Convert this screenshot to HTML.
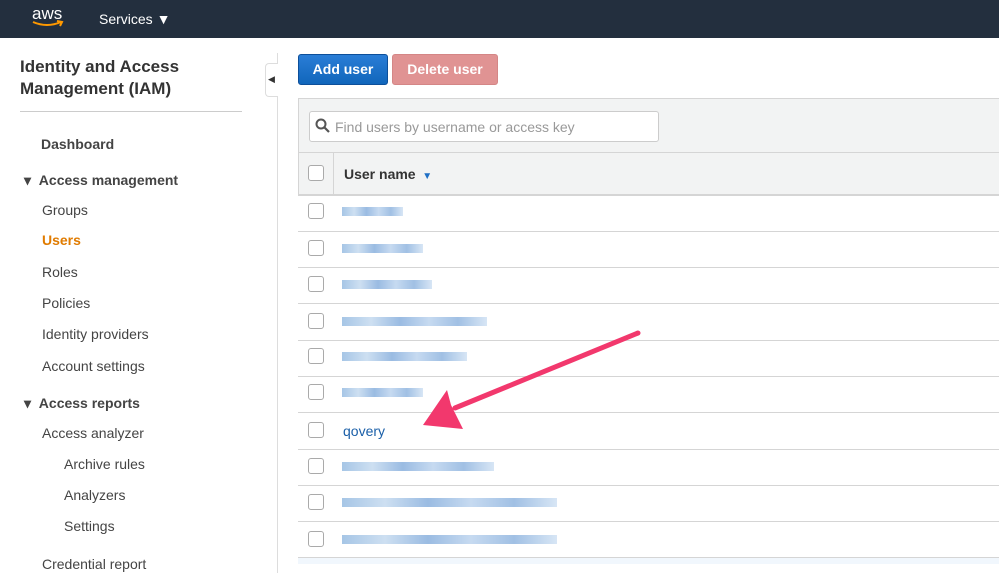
<!DOCTYPE html>
<html><head><style>
*{margin:0;padding:0;box-sizing:border-box}
body{width:999px;height:564px;overflow:hidden;background:#fff;font-family:"Liberation Sans",Arial,sans-serif;position:relative;color:#333}
.top{position:absolute;left:0;top:0;width:999px;height:38px;background:#232f3e}
.a{position:absolute;font-size:14px;color:#444}
.side{position:absolute;left:277px;top:53px;width:1px;height:520px;background:#ddd}
.row{position:absolute;left:298px;width:701px;height:1px;background:#d5d5d5}
.cb{position:absolute;left:308px;width:16px;height:16px;border:1px solid #aaa;border-radius:3px;background:#fff}
.bar{position:absolute;left:342px;height:9px;background:linear-gradient(90deg,#9cbfe3,#c8dcf0 20%,#8fb4df 40%,#c0d6ef 60%,#96b9e1 80%,#d3e3f4);opacity:.9}
</style></head><body>
<div class="top">
<div style="position:absolute;left:32px;top:4px;color:#fff;font-size:17px">aws</div>
<svg style="position:absolute;left:31px;top:20px" width="34" height="9"><path d="M2 2 Q16 8 30 2 M26 1 L31 2 L29 6" stroke="#f90" stroke-width="2" fill="none"/></svg>
<div style="position:absolute;left:99px;top:11px;color:#fff;font-size:14px">Services ▼</div>
</div>
<div style="position:absolute;left:20px;top:56px;font-size:17px;font-weight:bold;line-height:22px;color:#333">Identity and Access<br>Management (IAM)</div>
<div style="position:absolute;left:20px;top:111px;width:222px;height:1px;background:#ccc"></div>
<div class="a" style="left:41px;top:136px;font-weight:bold">Dashboard</div>
<div class="a" style="left:24px;top:172px;font-weight:bold">▾ &nbsp;Access management</div>
<div class="a" style="left:42px;top:202px">Groups</div>
<div class="a" style="left:42px;top:232px;color:#e07b00;font-weight:bold">Users</div>
<div class="a" style="left:42px;top:264px">Roles</div>
<div class="a" style="left:42px;top:295px">Policies</div>
<div class="a" style="left:42px;top:326px">Identity providers</div>
<div class="a" style="left:42px;top:358px">Account settings</div>
<div class="a" style="left:24px;top:395px;font-weight:bold">▾ &nbsp;Access reports</div>
<div class="a" style="left:42px;top:425px">Access analyzer</div>
<div class="a" style="left:64px;top:456px">Archive rules</div>
<div class="a" style="left:64px;top:487px">Analyzers</div>
<div class="a" style="left:64px;top:518px">Settings</div>
<div class="a" style="left:42px;top:556px">Credential report</div>
<div class="side"></div>
<div style="position:absolute;left:265px;top:63px;width:13px;height:34px;border:1px solid #ddd;border-right:none;border-radius:4px 0 0 4px;background:#fff;font-size:9px;padding:10px 0 0 2px;color:#333">◀</div>
<div style="position:absolute;left:298px;top:54px;width:90px;height:31px;background:linear-gradient(#2a7dd6,#1166bb);border:1px solid #0d4f9a;border-radius:3px;color:#fff;font-weight:bold;font-size:14px;text-align:center;line-height:29px">Add user</div>
<div style="position:absolute;left:392px;top:54px;width:106px;height:31px;background:#e09393;border:1px solid #d48686;border-radius:3px;color:#fff;font-weight:bold;font-size:14px;text-align:center;line-height:29px">Delete user</div>
<div style="position:absolute;left:298px;top:98px;width:701px;height:97px;background:#f2f3f3;border:1px solid #d5d5d5;border-right:none"></div>
<div style="position:absolute;left:309px;top:111px;width:350px;height:31px;background:#fff;border:1px solid #ccc;border-radius:3px"></div>
<svg style="position:absolute;left:315px;top:118px" width="16" height="16"><circle cx="6" cy="6" r="4.5" stroke="#555" stroke-width="2" fill="none"/><path d="M9.5 9.5 L14 14" stroke="#555" stroke-width="2.2"/></svg>
<div style="position:absolute;left:335px;top:119px;font-size:14px;color:#999">Find users by username or access key</div>
<div class="row" style="top:152px"></div>
<div style="position:absolute;left:333px;top:153px;width:1px;height:42px;background:#d5d5d5"></div>
<div class="cb" style="top:165px"></div>
<div style="position:absolute;left:344px;top:166px;font-size:14px;font-weight:bold;color:#333">User name <span style="color:#1f6fc5;font-size:10px">&nbsp;▼</span></div>
<div class="row" style="top:195px"></div>
<div class="row" style="top:231px"></div><div class="row" style="top:267px"></div><div class="row" style="top:303px"></div><div class="row" style="top:340px"></div><div class="row" style="top:376px"></div><div class="row" style="top:412px"></div><div class="row" style="top:449px"></div><div class="row" style="top:485px"></div><div class="row" style="top:521px"></div><div class="row" style="top:557px"></div>
<div style="position:absolute;left:298px;top:558px;width:701px;height:6px;background:#f1f7fd"></div>
<div class="cb" style="top:203px"></div><div class="bar" style="top:207px;width:61px"></div>
<div class="cb" style="top:240px"></div><div class="bar" style="top:244px;width:81px"></div>
<div class="cb" style="top:276px"></div><div class="bar" style="top:280px;width:90px"></div>
<div class="cb" style="top:313px"></div><div class="bar" style="top:317px;width:145px"></div>
<div class="cb" style="top:348px"></div><div class="bar" style="top:352px;width:125px"></div>
<div class="cb" style="top:384px"></div><div class="bar" style="top:388px;width:81px"></div>
<div class="cb" style="top:422px"></div><div style="position:absolute;left:343px;top:423px;font-size:14px;color:#1a5fa8">qovery</div>
<div class="cb" style="top:458px"></div><div class="bar" style="top:462px;width:152px"></div>
<div class="cb" style="top:494px"></div><div class="bar" style="top:498px;width:215px"></div>
<div class="cb" style="top:531px"></div><div class="bar" style="top:535px;width:215px"></div>
<svg style="position:absolute;left:0;top:0" width="999" height="564"><path d="M638 333 L455 408" stroke="#f2386d" stroke-width="5" stroke-linecap="round"/><path d="M423 425 L447 390 L451 405 L463 429 Z" fill="#f2386d"/></svg>
</body></html>
